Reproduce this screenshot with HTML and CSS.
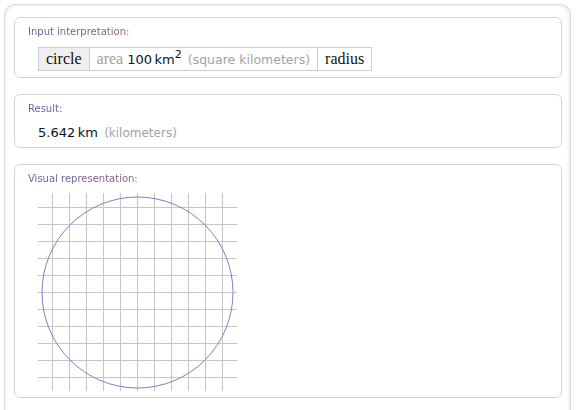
FILE: index.html
```html
<!DOCTYPE html>
<html>
<head>
<meta charset="utf-8">
<link rel="stylesheet" href="styles.css">
</head>
<body>
<div class="frame">
  <section class="pod pod-input">
    <h2 class="pod-title">Input interpretation:</h2>
    <div class="interp">
      <span class="cell cell-head">circle</span>
      <span class="cell"><span class="serif-gray">area</span> <span class="qty">100&#8201;km<sup>2</sup></span> <span class="unit-name">(square kilometers)</span></span>
      <span class="cell">radius</span>
    </div>
  </section>
  <section class="pod pod-result">
    <h2 class="pod-title">Result:</h2>
    <div class="result"><span class="qty">5.642&#8201;km</span> <span class="unit-name">(kilometers)</span></div>
  </section>
  <section class="pod pod-visual">
    <h2 class="pod-title">Visual representation:</h2>
    <svg class="plot" width="200" height="199" viewBox="0 0 200 199">
      <g stroke="#c6c6c6" stroke-width="1" fill="none">
        <path d="M0 14.5H199M0 31.5H199M0 48.5H199M0 65.5H199M0 82.5H199M0 99.5H199M0 116.5H199M0 133.5H199M0 150.5H199M0 167.5H199M0 184.5H199"/>
        <path d="M14.5 0V198M31.5 0V198M48.5 0V198M65.5 0V198M82.5 0V198M99.5 0V198M116.5 0V198M133.5 0V198M150.5 0V198M167.5 0V198M184.5 0V198"/>
      </g>
      <circle cx="99.5" cy="99.5" r="95.5" fill="none" stroke="#7f7fc2" stroke-width="1"/>
    </svg>
  </section>
</div>
</body>
</html>
```
FILE: styles.css
```css
html, body {
  margin: 0;
  padding: 0;
  background: #ffffff;
}
body {
  width: 581px;
  height: 410px;
  overflow: hidden;
  font-family: "DejaVu Sans", Verdana, sans-serif;
}
.frame {
  margin: 4px 0 0 4px;
  width: 567px;
  height: 420px;
  box-sizing: border-box;
  border: 1px solid #dcdcdc;
  border-bottom: none;
  border-radius: 11px 11px 0 0;
  box-shadow: inset 0 0 4px rgba(0, 0, 0, 0.12);
  padding: 12px 8px 0 9px;
  display: flex;
  flex-direction: column;
  gap: 16px;
}
.pod {
  border: 1px solid #d4d4d4;
  border-radius: 6px;
  background: #fff;
  padding: 7px 12px 6px 13px;
  font-size: 10px;
}
.pod-title {
  margin: 0;
  font-weight: normal;
  font-size: 10px;
  line-height: 13px;
  color: #6a5f98;
  background: linear-gradient(90deg, #5560a8 0px, #7b5b8e 60px, #8b6270 110px, #8b6270 200px);
  -webkit-background-clip: text;
  background-clip: text;
  -webkit-text-fill-color: transparent;
  display: block;
  width: max-content;
}
.interp {
  display: flex;
  margin: 9px 0 0 10px;
}
.cell {
  border: 1px solid #cfcfcf;
  border-left: none;
  height: 22px;
  line-height: 22px;
  padding: 0 7px;
  font-family: "Liberation Serif", "Times New Roman", serif;
  font-size: 16px;
  color: #111;
  white-space: nowrap;
}
.cell:first-child {
  border-left: 1px solid #cfcfcf;
}
.cell-head {
  background: #efefef;
}
.serif-gray {
  color: #a0a0a0;
}
.qty {
  font-family: "DejaVu Sans", Verdana, sans-serif;
  font-size: 13px;
  color: #111;
}
.qty sup {
  font-size: 11px;
  line-height: 0;
  vertical-align: 6px;
}
.unit-name {
  font-family: "DejaVu Sans", Verdana, sans-serif;
  font-size: 12.5px;
  color: #a3a3a3;
  margin-left: 2px;
}
.pod-result {
  padding-bottom: 5px;
}
.result {
  margin: 9px 0 0 10px;
  line-height: 18px;
  font-size: 13px;
  white-space: nowrap;
}
.result .unit-name {
  font-size: 12px;
}
.pod-visual {
  padding-bottom: 5px;
}
.plot {
  display: block;
  margin: 8px 0 0 10px;
}
```
